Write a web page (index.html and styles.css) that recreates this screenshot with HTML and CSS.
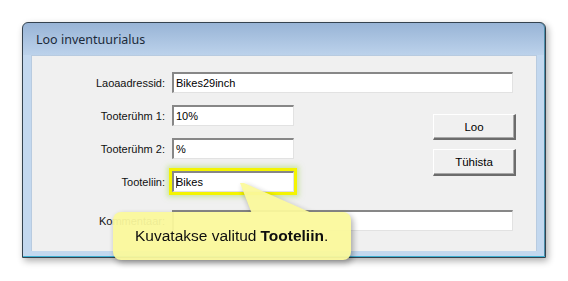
FILE: index.html
```html
<!DOCTYPE html>
<html lang="et">
  <head>
    <meta charset="UTF-8" />
    <title>Loo inventuurialus</title>
    <link rel="stylesheet" href="styles.css">
  </head>
  <body>
    <div class="page">
      <div class="window">
        <div class="titlebar">Loo inventuurialus</div>
        <div class="client">
          <div class="row">
            <span class="label">Laoaadressid:</span>
            <div class="field wide">Bikes29inch</div>
          </div>

          <div class="middle">
            <div class="rows">
              <div class="row">
                <span class="label">Tooterühm 1:</span>
                <div class="field">10%</div>
              </div>
              <div class="row">
                <span class="label">Tooterühm 2:</span>
                <div class="field">%</div>
              </div>
              <div class="row">
                <span class="label">Tooteliin:</span>
                <div class="field marked"><span class="caret"></span>Bikes</div>
              </div>
            </div>
            <div class="buttons">
              <div class="btn">Loo</div>
              <div class="btn tall">Tühista</div>
            </div>
          </div>

          <div class="row comment">
            <span class="label">Kommentaar:</span>
            <div class="field wide"></div>
          </div>
        </div>
      </div>

      <!-- callout over the dialog -->
      <div class="callout">Kuvatakse valitud <b>Tooteliin</b>.</div>
    </div>
  </body>
</html>
```

FILE: styles.css
```css
* {
  margin: 0;
  padding: 0;
  box-sizing: border-box;
}
body,
html {
  width: 100%;
  height: 100%;
  background: #fff;
}
.page {
  position: relative;
  width: 568px;
  height: 281px;
  padding: 22px 0 0 22px;
}

/* WINDOW */
.window {
  width: 524px;
  height: 236px;
  display: flex;
  flex-direction: column;
  border: 1px solid #34424f;
  border-radius: 6px 6px 0 0;
  padding: 0 8px 6px 8px;
  background: linear-gradient(#98b4d6 0, #bcd2eb 32px, #c3d8ef 32px);
  box-shadow: 2px 3px 7px rgba(0, 0, 0, 0.32), inset 0 -1px 0 #3fb0d2,
    inset -1px 0 0 #4c8eaa;
}
.titlebar {
  height: 32px;
  padding-left: 5px;
  display: flex;
  align-items: center;
  font-family: "Noto Sans", sans-serif;
  font-size: 12.5px;
  color: #1b2a3a;
}
.client {
  flex: 1;
  background: #f0f0f0;
  border: 1px solid #b8cbe0;
  border-bottom: none;
  padding: 16px 23px 0 0;
  font-family: "Liberation Sans", sans-serif;
  font-size: 11px;
  color: #000;
}

/* FORM ROWS */
.row {
  display: flex;
  align-items: center;
  height: 21px;
}
.label {
  width: 133px;
  text-align: right;
  color: #111;
}
.field {
  margin-left: 7px;
  width: 122px;
  height: 21px;
  background: #fff;
  border-top: 2px solid #878787;
  border-left: 2px solid #878787;
  border-right: 1px solid #e2e2e2;
  border-bottom: 1px solid #e2e2e2;
  padding: 2px 0 0 2px;
  line-height: 15px;
  white-space: nowrap;
}
.field.wide {
  width: 341px;
}
.field.marked {
  position: relative;
  box-shadow: 0 0 0 3px #f4f400, 0 0 5px 5px rgba(170, 220, 90, 0.5);
}
.caret {
  display: inline-block;
  width: 1px;
  height: 12px;
  margin-right: -1px;
  vertical-align: -2px;
  background: #666;
}
.middle {
  display: flex;
  margin-top: 12px;
}
.rows {
  display: flex;
  flex-direction: column;
  gap: 12px;
}
.buttons {
  margin-left: auto;
  margin-right: -3px;
  padding-top: 9px;
  display: flex;
  flex-direction: column;
  gap: 9px;
}
.btn {
  width: 83px;
  height: 26px;
  display: flex;
  align-items: center;
  justify-content: center;
  font-size: 11.5px;
  background: #f0f0f0;
  border-top: 1px solid #fff;
  border-left: 1px solid #fff;
  border-right: 2px solid #6c6c6c;
  border-bottom: 2px solid #6c6c6c;
  box-shadow: inset -1px -1px 0 #a8a8a8;
}
.btn.tall {
  height: 27px;
}
.comment {
  margin-top: 18px;
}

/* CALLOUT */
.callout {
  position: absolute;
  left: 113px;
  top: 212px;
  width: 238px;
  height: 48px;
  display: flex;
  align-items: center;
  padding-left: 22px;
  border-radius: 8px;
  background: #fbf99c;
  opacity: 0.94;
  font-family: "Liberation Sans", sans-serif;
  font-size: 15.5px;
  color: #000;
  filter: drop-shadow(2px 3px 3px rgba(0, 0, 0, 0.35));
}
.callout::before {
  content: "";
  position: absolute;
  left: 127px;
  top: -29px;
  width: 74px;
  height: 31px;
  background: #fbf99c;
  clip-path: polygon(0 0, 4px 0, 100% 100%, 12px 100%);
}
.callout b {
  margin-left: 4px;
}
```
